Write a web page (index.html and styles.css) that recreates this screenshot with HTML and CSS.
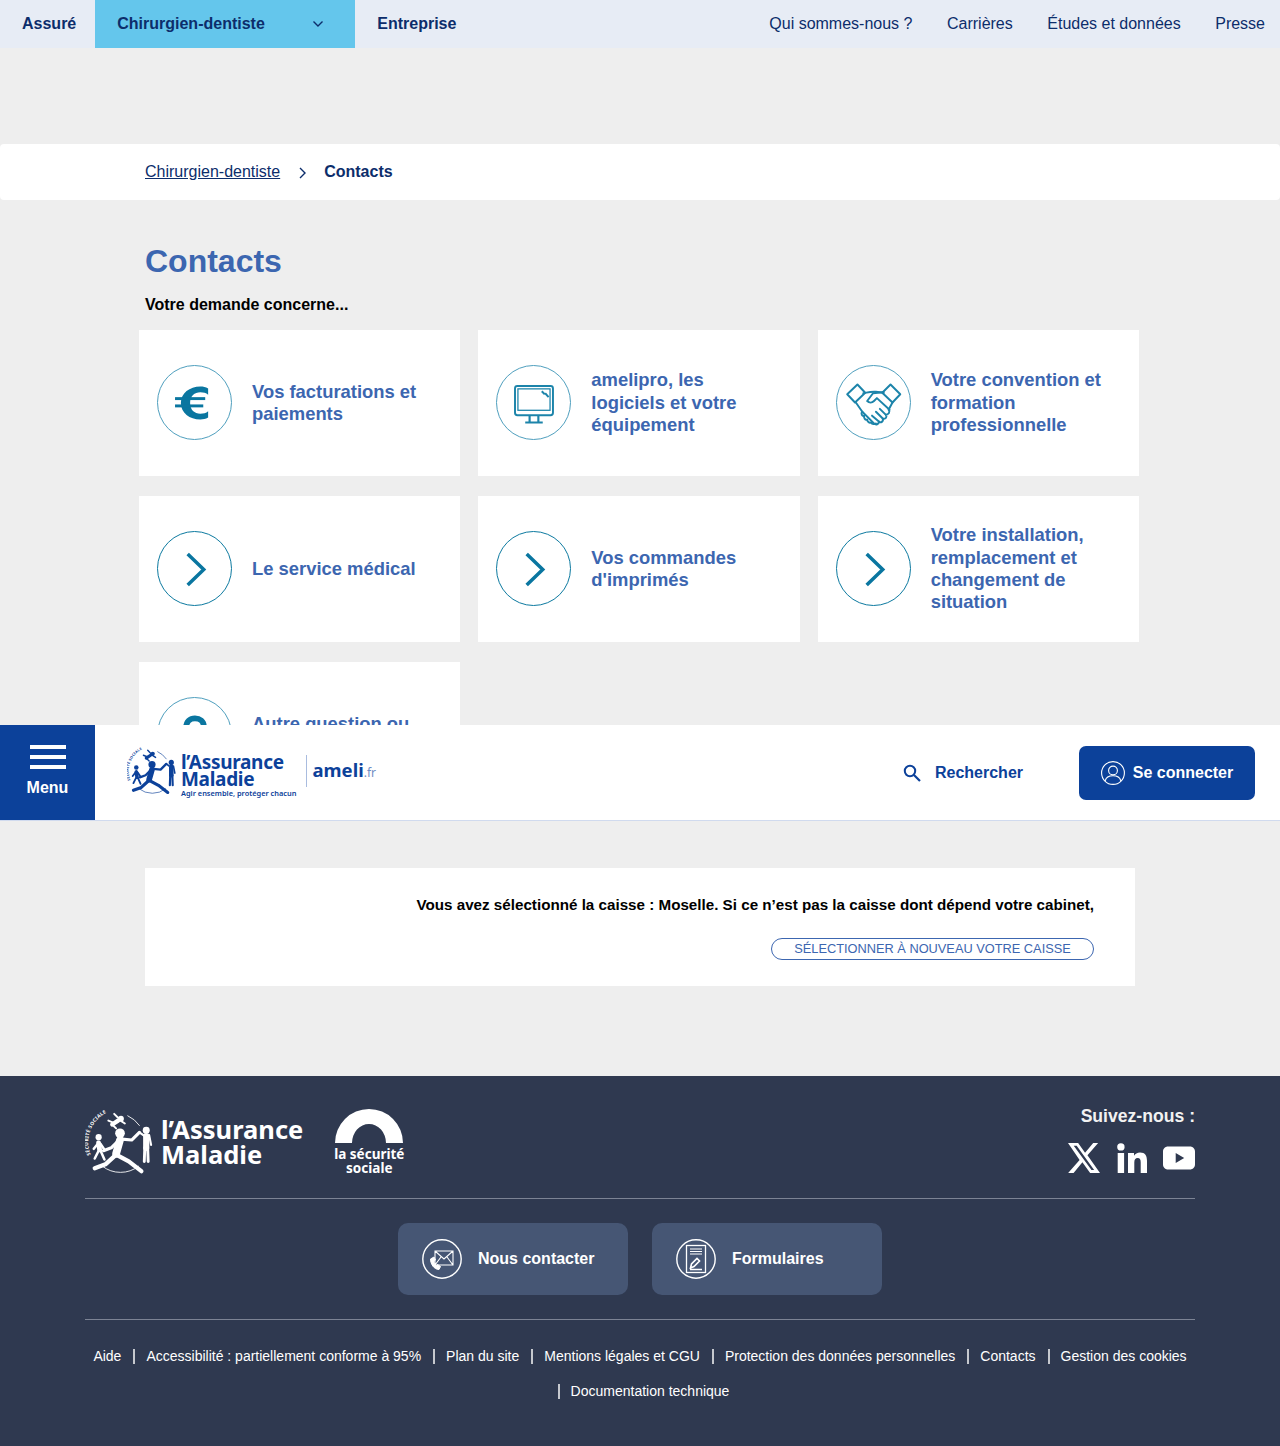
FILE: index.html
```html
<!DOCTYPE html>
<html lang="fr">
<head>
<meta charset="utf-8">
<title>Contacts - ameli.fr</title>
<link rel="stylesheet" href="styles.css">
</head>
<body>
<svg class="defs" width="0" height="0" aria-hidden="true">
  <defs>
    <path id="seal-arc" d="M5 48 A33 33 0 0 1 38 2"/>
    <symbol id="am-figures" viewBox="0 0 70 70">
      <g fill="currentColor" stroke="none">
        <circle cx="35" cy="26" r="5"/>
        <circle cx="62" cy="23" r="3.6"/>
        <circle cx="13" cy="30" r="3.2"/>
        <circle cx="36" cy="11" r="3"/>
      </g>
      <g fill="none" stroke="currentColor" stroke-linecap="round" stroke-linejoin="round">
        <path stroke-width="8" d="M35 33 L31 47"/>
        <path stroke-width="4.4" d="M31 48 L20 58 L9 62"/>
        <path stroke-width="4.4" d="M31 48 L44 55 L57 65"/>
        <path stroke-width="3.2" d="M34 33 L26 41 L18 44"/>
        <path stroke-width="3.2" d="M37 32 L47 33 L55 25"/>
        <path stroke-width="6.4" d="M62 29 L62 41"/>
        <path stroke-width="3" d="M60.5 41 L60 55 M63.5 41 L64 55"/>
        <path stroke-width="2.2" d="M59 28 L55 25 M65 28 L67 38"/>
        <path stroke-width="5" d="M13 36 L14 43"/>
        <path stroke-width="2.6" d="M13 44 L9 52 M15 44 L19 53 M15 37 L19 43 M12 37 L8 42"/>
        <path stroke-width="4.4" d="M33 13 L27 17"/>
        <path stroke-width="2" d="M27 17 L31 21 M28 15 L23 13 M34 12 L40 16 M33 10 L29 6"/>
        <path stroke-width=".9" d="M43 8 A30 30 0 0 1 55 18 M17 60 A30 30 0 0 0 54 60"/>
      </g>
      <text class="seal-text" fill="currentColor"><textPath href="#seal-arc">SÉCURITÉ SOCIALE</textPath></text>
    </symbol>
    <symbol id="ico-chevron" viewBox="0 0 75 75">
      <path d="M30.500 22.500 L47 38.500 L30.500 54.500" fill="none" stroke="#0a76a0" stroke-width="3.600"/>
    </symbol>
  </defs>
</svg>

<nav class="topnav">
  <div class="topnav-left">
    <a class="aud">Assuré</a>
    <a class="aud aud-active">Chirurgien-dentiste
      <svg class="aud-caret" width="12" height="8" viewBox="0 0 12 8"><path d="M1.5 1.5 L6 6 L10.5 1.5" fill="none" stroke="#0c2d6b" stroke-width="1.4"/></svg>
    </a>
    <a class="aud">Entreprise</a>
  </div>
  <div class="topnav-right">
    <a>Qui sommes-nous ?</a>
    <a>Carrières</a>
    <a>Études et données</a>
    <a>Presse</a>
  </div>
</nav>

<div class="crumbs">
  <a class="crumb-link">Chirurgien-dentiste</a>
  <svg class="crumb-sep" width="7" height="12" viewBox="0 0 7 12"><path d="M1 1 L6 6 L1 11" fill="none" stroke="#0c2d6b" stroke-width="1.4"/></svg>
  <strong class="crumb-current">Contacts</strong>
</div>

<main class="content">
  <h1 class="title">Contacts</h1>
  <p class="lead">Votre demande concerne...</p>
  <div class="cards">
    <a class="card">
      <span class="disc disc-light">
        <svg viewBox="0 0 75 75" class="disc-svg"><g fill="#0a76a0" transform="translate(1.500 0)"><path d="M50 23 C47.500 21.500 45 21 42 21 C31 21 22 28 22 38 C22 48 31 55 42 55 C45 55 47.500 54.500 50 53 L50 46.500 C48 48.500 45 49 42 49 C36 49 31.500 45 31.500 38 C31.500 31 36 27 42 27 C45 27 48 27.800 50 29.500 Z"/><rect x="16" y="32" width="31" height="3"/><rect x="16" y="39.500" width="29" height="3"/></g></svg>
      </span>
      <span class="card-label">Vos facturations et paiements</span>
    </a>
    <a class="card">
      <span class="disc disc-light">
        <svg viewBox="0 0 75 75" class="disc-svg"><g fill="none" stroke="#1c84aa" stroke-width="2"><rect x="18.500" y="20.500" width="39" height="30" rx="2.500"/><rect x="21.500" y="23.500" width="33" height="22" stroke-width="1.300"/><path d="M33.500 51 V57 M42.500 51 V57 M29 58 H47" stroke-width="2.200"/><path d="M46 26 L49 29 M49.500 28 L53 32" stroke-width="2"/></g></svg>
      </span>
      <span class="card-label">amelipro, les logiciels et votre équipement</span>
    </a>
    <a class="card">
      <span class="disc disc-light">
        <svg viewBox="0 0 75 75" class="disc-svg"><g fill="none" stroke="#1c84aa" stroke-width="2" stroke-linejoin="round" stroke-linecap="round"><path d="M10.500 29 L21 19 L29 27.500 L18.500 37.500 Z"/><path d="M65 29 L55 19 L46.500 27.500 L57 37.500 Z"/><path d="M27 28 C32 27 36 26 40 26.500 L48 27.500"/><path d="M47 27 L37 28 L31 36 C33 38 36 38 38 36 L41 33 L54 45"/><path d="M19 37 L26 47 L38 59 C40 61 43 60 43 57 C45 59 48 57 47 54 C50 55 52 52 50 50 C53 50 55 47 53 45 L57 37.500"/><path d="M36 51 L43 57 M40 47 L47 54 M44 44 L50 50"/><path d="M26 47 C24 49 26 52 28 51 C27 53 29 56 31 55 C31 57 33 59 35 58 C36 60 39 60 40 59"/></g></svg>
      </span>
      <span class="card-label">Votre convention et formation professionnelle</span>
    </a>
    <a class="card">
      <span class="disc disc-dark"><svg class="disc-svg"><use href="#ico-chevron"/></svg></span>
      <span class="card-label">Le service médical</span>
    </a>
    <a class="card">
      <span class="disc disc-dark"><svg class="disc-svg"><use href="#ico-chevron"/></svg></span>
      <span class="card-label">Vos commandes d'imprimés</span>
    </a>
    <a class="card">
      <span class="disc disc-dark"><svg class="disc-svg"><use href="#ico-chevron"/></svg></span>
      <span class="card-label">Votre installation, remplacement et changement de situation</span>
    </a>
    <a class="card">
      <span class="disc disc-light">
        <svg viewBox="0 0 75 75" class="disc-svg"><path d="M29 30 C29 24 33 21 38 21 C43 21 47 24 47 29 C47 35 38 35 38 43 M38 49 V54" fill="none" stroke="#0a76a0" stroke-width="6"/></svg>
      </span>
      <span class="card-label">Autre question ou demande</span>
    </a>
  </div>

  <section class="caisse">
    <p class="caisse-text">Vous avez sélectionné la caisse : Moselle. Si ce n’est pas la caisse dont dépend votre cabinet,</p>
    <a class="caisse-btn">Sélectionner à nouveau votre caisse</a>
  </section>
</main>

<header class="mainbar">
  <a class="menu-btn">
    <span class="burger"><i></i><i></i><i></i></span>
    <span>Menu</span>
  </a>
  <div class="brand">
    <svg class="brand-fig"><use href="#am-figures"/></svg>
    <div class="brand-words">
      <span class="brand-name">l’Assurance<br>Maladie</span>
      <span class="brand-tag">Agir ensemble, protéger chacun</span>
    </div>
    <span class="ameli"><b>ameli</b><small>.fr</small></span>
  </div>
  <div class="bar-actions">
    <a class="search">
      <svg width="18" height="18" viewBox="0 0 18 18"><circle cx="7" cy="7" r="5.2" fill="none" stroke="#0c419a" stroke-width="2"/><path d="M11 11 L17 17" stroke="#0c419a" stroke-width="2.2"/></svg>
      Rechercher
    </a>
    <a class="login">
      <svg width="24" height="24" viewBox="0 0 24 24" fill="none" stroke="#fff" stroke-width="1.1"><circle cx="12" cy="12" r="11.4"/><circle cx="12" cy="9.5" r="4.4"/><path d="M4.2 19.8 C5 16.4 8 14.8 12 14.8 C16 14.8 19 16.4 19.8 19.8"/></svg>
      Se connecter
    </a>
  </div>
</header>

<footer class="footer">
  <div class="foot-top">
    <div class="foot-logos">
      <div class="foot-am">
        <svg class="foot-fig"><use href="#am-figures"/></svg>
        <span class="foot-name">l’Assurance<br>Maladie</span>
      </div>
      <div class="foot-secu">
        <svg width="68" height="34" viewBox="0 0 68 34"><path fill="#fff" d="M0 34 A34 34 0 0 1 68 34 L51 34 A17 19 0 0 0 17 34 Z"/></svg>
        <span>la sécurité<br>sociale</span>
      </div>
    </div>
    <div class="follow">
      <span class="follow-title">Suivez-nous :</span>
      <div class="follow-icons">
        <svg class="ico-x" width="32" height="30" viewBox="0 0 24 22.5"><path fill="#fff" d="M18.9 0h3.7l-8 9.2 9.4 13.3h-7.4l-5.8-8-6.6 8H.1l8.6-9.8L0 0h7.6l5.2 7.3zm-1.3 20.2h2L6.5 2.1H4.3z"/></svg>
        <svg width="30" height="30" viewBox="0 0 30 30"><g fill="#fff"><circle cx="3.9" cy="3.9" r="3.7"/><rect x=".7" y="10" width="6.4" height="20"/><path d="M11 10 H17 V12.8 C18 11 20.4 9.5 23 9.5 C28.3 9.5 30 12.8 30 18 V30 H23.7 V19.4 C23.7 16.8 23 15 20.7 15 C18.300 15 17.300 16.800 17.300 19.400 V30 H11 Z"/></g></svg>
        <svg width="32" height="24" viewBox="0 0 32 24"><path fill="#fff" fill-rule="evenodd" d="M5 .6 H27 C29.800 .6 32 2.800 32 5.600 V18.400 C32 21.200 29.800 23.400 27 23.400 H5 C2.200 23.400 0 21.200 0 18.400 V5.600 C0 2.800 2.200 .6 5 .6 Z M12.700 7 V17 L21.200 12 Z"/></svg>
      </div>
    </div>
  </div>

  <div class="foot-actions">
    <a class="foot-btn">
      <svg width="40" height="40" viewBox="0 0 40 40" fill="none" stroke="#fff"><circle cx="20" cy="20" r="19.200" stroke-width="1.4"/><path stroke-width="1.100" d="M13 12 H31 V26 H13 Z M13 12 L22 20 L31 12 M13 26 L19 18 M31 26 L25 18"/><path fill="#fff" stroke-width="1" d="M8.500 20 C8.500 25 12 30.500 17 30.500 L18.500 27.500 L15.500 25.500 L14.500 26.500 C13 26 12 23.500 12 22 L13.500 21 L12 18 Z"/></svg>
      Nous contacter
    </a>
    <a class="foot-btn">
      <svg width="40" height="40" viewBox="0 0 40 40" fill="none" stroke="#fff"><circle cx="20" cy="20" r="19.200" stroke-width="1.400"/><rect x="10.500" y="6.500" width="19" height="27" stroke-width="1.300"/><path d="M14 10 H26 M14 12.500 H26 M14 15 H26" stroke-width="1.100"/><path stroke-width="1.600" d="M14.500 29 L15.500 25 L21 19.500 L23.500 22 L18 27.500 Z M14 30.500 H26"/></svg>
      Formulaires
    </a>
  </div>

  <ul class="foot-links">
    <li>Aide</li>
    <li>Accessibilité : partiellement conforme à 95%</li>
    <li>Plan du site</li>
    <li>Mentions légales et CGU</li>
    <li>Protection des données personnelles</li>
    <li>Contacts</li>
    <li>Gestion des cookies</li>
    <li>Documentation technique</li>
  </ul>
</footer>
</body>
</html>
```
FILE: styles.css
```css
* { box-sizing: border-box; }
html, body { margin: 0; padding: 0; }
body {
  position: relative;
  height: 1446px;
  overflow: hidden;
  background: #eeeeee;
  font-family: "Liberation Sans", Arial, sans-serif;
  font-size: 16px;
  color: #0c2d6b;
}
a { color: inherit; text-decoration: none; }
.defs { position: absolute; }
.seal-text { font-family: "Noto Sans", sans-serif; font-weight: 700; font-size: 5px; letter-spacing: .3px; }

/* top navigation */
.topnav {
  height: 48px;
  background: #e7ecf5;
  display: flex;
  justify-content: space-between;
  align-items: stretch;
}
.topnav-left { display: flex; }
.aud {
  display: flex;
  align-items: center;
  padding: 0 19px 0 22px;
  font-weight: 700;
}
.aud-active {
  width: 260px;
  justify-content: space-between;
  background: #64c6ec;
  padding-right: 31px;
}
.topnav-right {
  display: flex;
  align-items: center;
  gap: 34.5px;
  padding-right: 15px;
}

/* breadcrumb */
.crumbs {
  margin-top: 96px;
  height: 56px;
  background: #fff;
  border-radius: 4px;
  padding-left: 145px;
  display: flex;
  align-items: center;
}
.crumb-link { text-decoration: underline; }
.crumb-sep { margin: 1px 18px 0 19px; }
.crumb-current { font-weight: 700; }

/* content */
.content { padding-top: 42px; }
.title {
  margin: 0 0 0 145px;
  font-size: 32px;
  line-height: 38px;
  font-weight: 700;
  color: #3c66b0;
}
.lead {
  margin: 15px 0 0 145px;
  font-weight: 700;
  line-height: 19px;
  color: #000;
}
.cards {
  width: 1000px;
  margin: 16px 0 0 139px;
  display: grid;
  grid-template-columns: repeat(3, 1fr);
  column-gap: 18px;
  row-gap: 20px;
}
.card {
  height: 146px;
  background: #fff;
  padding: 0 30px 0 18px;
  display: flex;
  align-items: center;
  gap: 20px;
}
.disc {
  flex: none;
  width: 75px;
  height: 75px;
  margin-bottom: 2px;
  border-radius: 50%;
  background: #fff;
}
.disc-light { border: 1px solid #4f9fbe; }
.disc-dark { border: 1px solid #0d7aa0; }
.disc-svg { display: block; width: 73px; height: 73px; }
.card-label {
  font-size: 18.4px;
  line-height: 22.4px;
  font-weight: 700;
  color: #3c66b0;
}

/* caisse */
.caisse {
  width: 990px;
  height: 118px;
  margin: 60px 0 0 145px;
  background: #fff;
  padding: 28px 41px 0 0;
  display: flex;
  flex-direction: column;
  align-items: flex-end;
}
.caisse-text {
  margin: 0;
  font-size: 15.2px;
  line-height: 18px;
  font-weight: 700;
  color: #000;
}
.caisse-btn {
  margin-top: 24px;
  width: 323px;
  height: 22px;
  border: 1px solid #3c66b0;
  border-radius: 11px;
  font-size: 12.8px;
  line-height: 20px;
  text-align: center;
  text-transform: uppercase;
  color: #3c66b0;
}

/* sticky main bar, lies over the content */
.mainbar {
  position: absolute;
  left: 0;
  right: 0;
  top: 725px;
  height: 96px;
  background: #fff;
  border-bottom: 1px solid #d0daee;
  display: flex;
  align-items: stretch;
}
.menu-btn {
  width: 95px;
  background: #0c419a;
  color: #fff;
  font-weight: 700;
  display: flex;
  flex-direction: column;
  align-items: center;
  padding-top: 20px;
  gap: 10px;
}
.burger { display: flex; flex-direction: column; gap: 6px; }
.burger i { display: block; width: 36px; height: 4px; background: #fff; }
.brand {
  display: flex;
  align-items: center;
  padding-left: 32px;
  color: #0c419a;
}
.brand-fig { width: 50px; height: 50px; margin-right: 4px; margin-top: -4px; }
.brand-words { display: flex; flex-direction: column; padding-top: 7px; }
.brand-name {
  font-family: "Noto Sans", sans-serif;
  font-weight: 700;
  font-size: 19px;
  line-height: 17px;
  letter-spacing: -.3px;
}
.brand-tag {
  font-family: "Noto Sans", sans-serif;
  font-weight: 600;
  font-size: 7.4px;
  line-height: 10px;
  white-space: nowrap;
}
.ameli {
  margin: -4px 0 0 10px;
  padding-left: 5px;
  border-left: 1px solid #a9bcdf;
  font-family: "Noto Sans", sans-serif;
  line-height: 29px;
}
.ameli b { font-size: 18.5px; font-weight: 700; }
.ameli small { font-size: 12px; color: #6f8dc4; }
.bar-actions {
  margin-left: auto;
  display: flex;
  align-items: center;
  padding-right: 25px;
  gap: 56px;
  font-weight: 700;
}
.search { display: flex; align-items: center; gap: 13.500px; color: #0c419a; }
.login {
  width: 176px;
  height: 54px;
  background: #0c419a;
  color: #fff;
  border-radius: 7px;
  display: flex;
  align-items: center;
  justify-content: center;
  gap: 8px;
}

/* footer */
.footer {
  margin-top: 90px;
  height: 370px;
  background: #2f3950;
  padding: 0 85px;
  color: #fff;
}
.foot-top {
  height: 123px;
  border-bottom: 1px solid #7c8394;
  display: flex;
  justify-content: space-between;
}
.foot-logos { display: flex; padding-top: 33px; gap: 32px; }
.foot-am { display: flex; height: 68px; }
.foot-fig { width: 70px; height: 68px; margin-right: 6px; margin-top: -1px; }
.foot-name {
  font-family: "Noto Sans", sans-serif;
  font-weight: 700;
  font-size: 25.5px;
  line-height: 25px;
  letter-spacing: 0;
  padding-top: 8px;
  white-space: nowrap;
}
.foot-secu {
  display: flex;
  flex-direction: column;
  align-items: center;
  width: 68px;
  font-family: "Noto Sans", sans-serif;
  font-weight: 700;
  font-size: 13.5px;
  line-height: 14px;
  text-align: center;
  white-space: nowrap;
}
.foot-secu svg { margin-bottom: 4px; }
.follow {
  display: flex;
  flex-direction: column;
  align-items: flex-end;
  padding-top: 30px;
}
.follow-title { font-size: 17.6px; line-height: 21px; font-weight: 700; color: #f2f2f2; }
.follow-icons { display: flex; align-items: center; gap: 16px; margin-top: 16px; }
.ico-x { margin-right: 1px; }
.foot-actions {
  height: 121px;
  border-bottom: 1px solid #7c8394;
  display: flex;
  justify-content: center;
  align-items: center;
  gap: 24px;
}
.foot-btn {
  width: 230px;
  height: 72px;
  background: #465674;
  border-radius: 10px;
  display: flex;
  align-items: center;
  padding-left: 24px;
  gap: 16px;
  font-weight: 700;
}
.foot-links {
  list-style: none;
  margin: 19px 0 0;
  padding: 0;
  display: flex;
  flex-wrap: wrap;
  justify-content: center;
  column-gap: 5px;
  font-size: 14px;
  line-height: 35px;
}
.foot-links li { display: flex; align-items: center; }
.foot-links li + li::before {
  content: "";
  width: 2px;
  height: 15px;
  background: rgba(255, 255, 255, .72);
  margin: 0 11px 0 7px;
}
```
